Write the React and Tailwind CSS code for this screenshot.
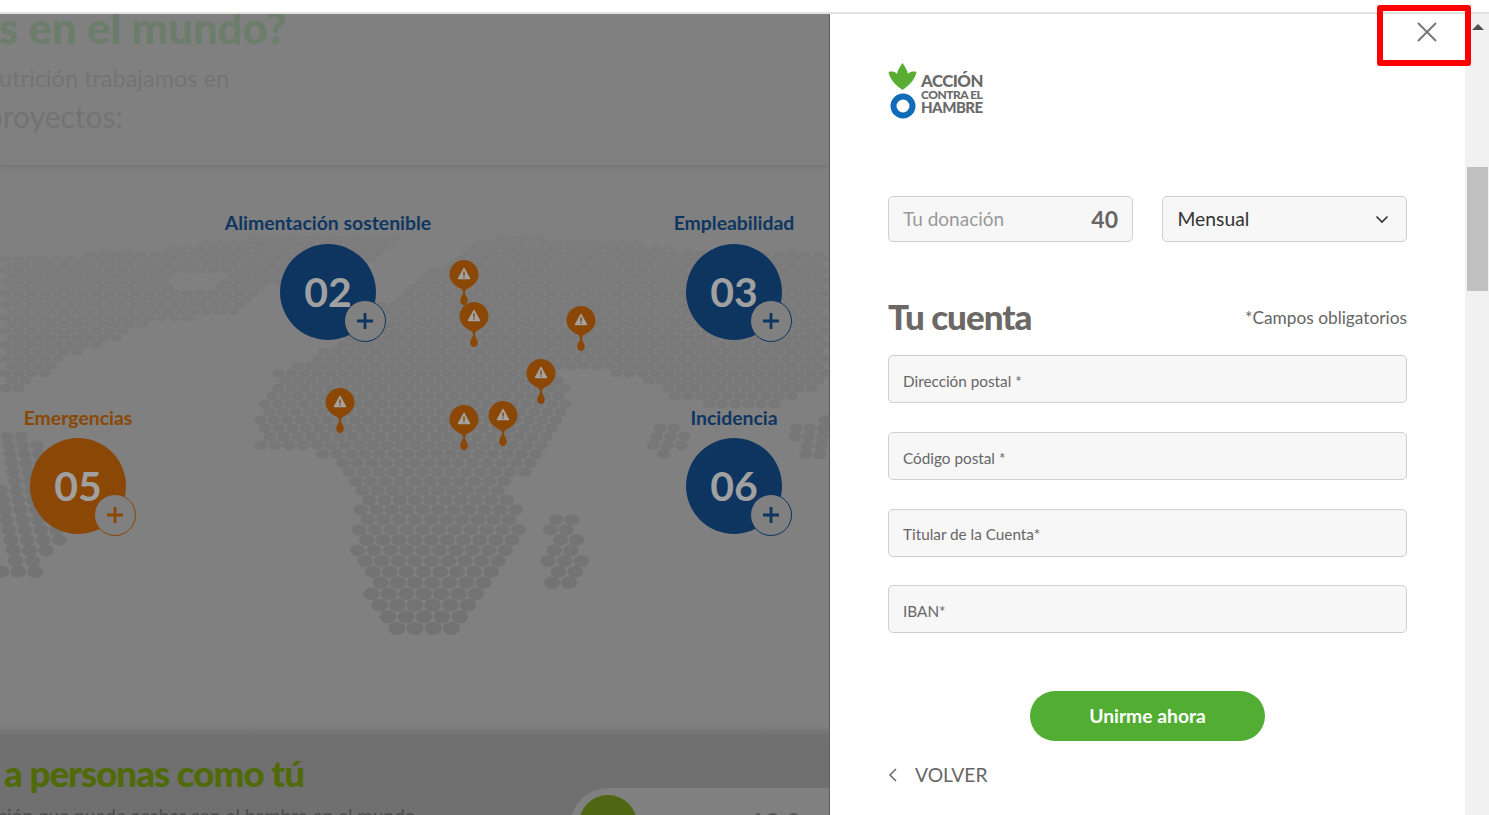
import React from "react";

const scale = (pts) => pts.map(([x, y]) => [x / 1.889, 215 + y / 3]);
const LAND = [
  [[530,460],[620,400],[800,390],[1060,450],[1075,540],[1060,640],[1040,700],[990,770],[960,820],[1000,880],[960,1000],[930,1080],[910,1150],[860,1245],[730,1245],[690,1100],[660,1030],[670,920],[680,830],[640,770],[600,700],[490,695],[480,620],[500,540]],
  [[620,400],[700,290],[800,180],[880,100],[950,50],[1050,70],[1150,70],[1300,100],[1568,110],[1568,480],[1500,560],[1400,575],[1300,560],[1200,490],[1090,450],[1060,450],[800,390]],
  [[0,125],[300,100],[440,70],[530,60],[760,60],[700,130],[640,190],[560,180],[480,230],[440,300],[300,310],[250,350],[120,430],[60,500],[0,560]],
  [[0,640],[60,650],[110,800],[130,960],[60,1080],[10,1095],[0,1090]],
  [[1030,905],[1095,905],[1105,1000],[1095,1120],[1025,1110],[1040,1000]],
  [[1225,620],[1310,640],[1310,670],[1260,735],[1225,690]],
  [[1480,620],[1568,610],[1568,725],[1520,720]],
].map(scale);
const HOLE = scale([[325,175],[430,165],[410,225],[320,230]]);

const inside = (x, y, p) => {
  let c = false;
  for (let i = 0, j = p.length - 1; i < p.length; j = i++) {
    const [xi, yi] = p[i];
    const [xj, yj] = p[j];
    if (yi > y !== yj > y && x < ((xj - xi) * (y - yi)) / (yj - yi) + xi) c = !c;
  }
  return c;
};

const dots = [];
{
  let y = 232;
  let row = 0;
  while (y < 630) {
    const t = (y - 232) / 398;
    const dy = 5 + t * 7;
    const sx = y < 400 ? 13 : 13 + ((y - 400) / 220) * 5;
    const v = Math.round(124 - t * 10);
    const start = 415 + (row % 2 ? sx / 2 : 0);
    const n = Math.ceil(430 / sx);
    for (let k = -n; k <= n; k++) {
      const x = start + k * sx;
      if (LAND.some((p) => inside(x, y, p)) && !inside(x, y, HOLE)) {
        dots.push([x, y, sx * 0.47, dy * 0.55, `rgb(${v},${v},${v})`]);
      }
    }
    y += dy;
    row++;
  }
}

function WorldMap() {
  return (
    <svg className="absolute left-0 top-[-165px] pointer-events-none" width="830" height="815" viewBox="0 0 830 815">
      {dots.map(([x, y, rx, ry, f], i) => (
        <ellipse key={i} cx={x} cy={y} rx={rx} ry={ry} fill={f} />
      ))}
    </svg>
  );
}

function Pin({ className }) {
  return (
    <svg className={`absolute ${className}`} width="30" height="46" viewBox="0 0 30 46">
      <path
        fill="#8a4705"
        d="M15 0C23 0 29.5 6.5 29.5 14.5C29.5 22 23 26.5 18.5 28.5C16.5 29.5 16 31 16 33C16 35 18.8 37.5 18.8 40.5C18.8 43 17.2 45 15 45C12.8 45 11.2 43 11.2 40.5C11.2 37.5 14 35 14 33C14 31 13.5 29.5 11.5 28.5C7 26.5 .5 22 .5 14.5C.5 6.5 7 0 15 0Z"
      />
      <path fill="#a3a3a3" stroke="#a3a3a3" strokeWidth="1.5" strokeLinejoin="round" d="M15 8.5L20.5 18.5H9.5Z" />
      <path stroke="#8a4705" strokeWidth="1.5" d="M15 11.5V15.5M15 16.5V17.8" />
    </svg>
  );
}

function Plus({ stroke }) {
  return (
    <svg width="18" height="18" viewBox="0 0 18 18">
      <path d="M9 1V17M1 9H17" stroke={stroke} strokeWidth="2.8" />
    </svg>
  );
}

function MapNode({ className, label, num, orange, circleGap = "mt-[9px]" }) {
  const text = orange ? "text-[#8a4705]" : "text-[#0f3660]";
  const bg = orange ? "bg-[#8a4705]" : "bg-[#0d3560]";
  const border = orange ? "border-[#8a4705]" : "border-[#0d3560]";
  return (
    <div className={`absolute w-[240px] flex flex-col items-center ${className}`}>
      <div className={`text-[19.4px] leading-[24px] font-bold whitespace-nowrap ${text}`}>{label}</div>
      <div className={`relative w-[96px] h-[96px] rounded-full flex items-center justify-center ${circleGap} ${bg}`}>
        <span className="-mt-[2px] text-[41px] font-bold text-[#a0a0a0] leading-none">{num}</span>
        <div className={`absolute left-[64px] top-[56px] w-[42px] h-[42px] rounded-full border bg-[#808080] flex items-center justify-center ${border}`}>
          <Plus stroke={orange ? "#8a4705" : "#0d3560"} />
        </div>
      </div>
    </div>
  );
}

function Logo() {
  return (
    <div className="flex items-start gap-[4px] h-[56px]">
      <div className="flex flex-col items-center w-[29px]">
        <svg width="29" height="27" viewBox="0 0 28 27">
          <path
            fill="#58ad32"
            d="M14 0C16 3 19 7 19.5 11C21 9 23 8 28 9C27 16 20 23 14 27C8 23 1 16 0 9C5 8 7 9 8.5 11C9 7 12 3 14 0Z"
          />
        </svg>
        <svg width="26" height="26" viewBox="0 0 26 26" className="mt-[3px]">
          <circle cx="13" cy="13" r="9.5" fill="none" stroke="#0f6cb8" strokeWidth="6" />
        </svg>
      </div>
      <div className="flex flex-col text-[#6a6a6a] font-black leading-none tracking-[-0.5px] mt-[9px]">
        <span className="text-[16.8px] leading-[17px]">ACCIÓN</span>
        <span className="text-[12px] leading-[11px]">CONTRA EL</span>
        <span className="text-[15px] leading-[14px]">HAMBRE</span>
      </div>
    </div>
  );
}

function Field({ label, className = "pb-0" }) {
  return (
    <div className={`h-[48px] w-full rounded-[5px] border border-[#cfcfcf] bg-[#f7f7f7] pl-[14px] pt-[4px] flex items-center text-[15.3px] text-[#666666] ${className}`}>
      {label}
    </div>
  );
}

export default function App() {
  return (
    <div className="relative h-[815px] w-full overflow-hidden bg-white flex flex-col font-['Lato',sans-serif]">
      <div className="h-[12px] shrink-0 bg-white" />
      <div className="h-[2px] shrink-0 bg-[#e2e2e2]" />
      <div className="flex flex-1 min-h-0">
        {/* background page under the dimmed overlay */}
        <div className="w-[830px] shrink-0 flex flex-col overflow-hidden bg-[#808080] border-r border-[#5c5c5c]">
          <div className="h-[152px] shrink-0 border-b border-[#767676] shadow-[0_1px_3px_rgba(0,0,0,0.08)] overflow-hidden">
            <div className="-mt-[12px] -ml-[1px] text-[43.5px] leading-[50px] font-black text-[#6d7d6c] whitespace-nowrap">s en el mundo?</div>
            <div className="mt-[11px] -ml-[1px] text-[23.5px] leading-[30px] text-[#737373] whitespace-nowrap">utrición trabajamos en</div>
            <div className="mt-[6px] -ml-[14px] text-[30px] leading-[34px] text-[#737373] whitespace-nowrap">proyectos:</div>
          </div>
          <div className="relative h-[559px] shrink-0">
            <WorldMap />
            <MapNode className="left-[208px] top-[45px]" label="Alimentación sostenible" num="02" />
            <MapNode className="left-[614px] top-[45px]" label="Empleabilidad" num="03" />
            <MapNode className="-left-[42px] top-[240px]" label="Emergencias" num="05" orange circleGap="mt-[8px]" />
            <MapNode className="left-[614px] top-[240px]" label="Incidencia" num="06" circleGap="mt-[8px]" />
            <Pin className="left-[449px] top-[94px]" />
            <Pin className="left-[459px] top-[136px]" />
            <Pin className="left-[566px] top-[140px]" />
            <Pin className="left-[526px] top-[193px]" />
            <Pin className="left-[325px] top-[222px]" />
            <Pin className="left-[449px] top-[239px]" />
            <Pin className="left-[488px] top-[235px]" />
          </div>
          <div className="flex-1 bg-gradient-to-b from-[#808080] via-[#707070] via-[8%] to-[#6f6f6f] flex">
            <div className="w-[570px] shrink-0 overflow-hidden pt-[26px]">
              <div className="pl-[4px] text-[36.7px] leading-[44px] font-black text-[#4f6a06] tracking-[-1px] whitespace-nowrap">a personas como tú</div>
              <div className="mt-[9px] -ml-[2px] text-[19px] leading-[24px] text-[#4e4e4e] whitespace-nowrap">ción que puede acabar con el hambre en el mundo</div>
            </div>
            <div className="flex-1 mt-[63px] rounded-tl-[38px] bg-[#808080] pl-[9px] pt-[7px] flex overflow-hidden">
              <div className="w-[58px] h-[58px] rounded-full bg-[#4f6712] shrink-0" />
              <div className="ml-[113px] pt-[12px] text-[26px] leading-[30px] font-bold text-[#5a5a5a] whitespace-nowrap">10.0</div>
            </div>
          </div>
        </div>

        {/* form panel */}
        <div className="relative flex-1 min-w-0 bg-white pl-[58px] pr-[58px] flex flex-col overflow-hidden">
          <div className="mt-[49px]">
            <Logo />
          </div>
          <div className="mt-[77px] flex justify-between">
            <div className="w-[245px] h-[46px] rounded-[5px] border border-[#cfcfcf] bg-[#f7f7f7] pl-[14px] pr-[14px] flex items-center justify-between">
              <span className="text-[19px] text-[#999999]">Tu donación</span>
              <span className="text-[23px] font-bold text-[#666666]">40</span>
            </div>
            <div className="w-[245px] h-[46px] rounded-[5px] border border-[#cfcfcf] bg-[#f7f7f7] pl-[14.5px] pr-[17px] flex items-center justify-between">
              <span className="text-[19.3px] text-[#333333]">Mensual</span>
              <svg width="14" height="9" viewBox="0 0 14 9">
                <path d="M1.5 1.5L7 7L12.5 1.5" fill="none" stroke="#333333" strokeWidth="1.6" />
              </svg>
            </div>
          </div>
          <div className="mt-[51px] flex items-center justify-between h-[48px]">
            <h2 className="-mt-[2px] text-[35px] font-black text-[#6b6866] tracking-[-1px] leading-none">Tu cuenta</h2>
            <span className="mt-[2px] text-[17.3px] text-[#666666]">*Campos obligatorios</span>
          </div>
          <div className="mt-[14px] flex flex-col gap-[29px]">
            <Field label="Dirección postal *" />
            <Field label="Código postal *" />
            <Field label="Titular de la Cuenta*" className="pb-[2px]" />
            <Field label="IBAN*" className="-mt-[1px]" />
          </div>
          <div className="mt-[58px] flex justify-center">
            <button className="w-[235px] h-[50px] rounded-full bg-[#52ad33] text-white text-[19.3px] font-bold">Unirme ahora</button>
          </div>
          <div className="mt-[21px] flex items-center gap-[18px] h-[26px]">
            <svg width="9" height="14" viewBox="0 0 9 14">
              <path d="M8 1L2 7L8 13" fill="none" stroke="#666666" strokeWidth="1.5" />
            </svg>
            <span className="text-[19.3px] text-[#666666]">VOLVER</span>
          </div>
        </div>

        {/* scrollbar */}
        <div className="w-[24px] shrink-0 bg-[#f1f1f1] pl-[2px] pr-[1px] flex flex-col">
          <div className="h-[153px] shrink-0 pt-[10px] flex justify-center items-start">
            <svg width="12" height="6" viewBox="0 0 12 6">
              <path d="M6 0L12 6H0Z" fill="#505050" />
            </svg>
          </div>
          <div className="h-[124px] bg-[#c1c1c1]" />
        </div>
      </div>

      {/* close button with highlight */}
      <div className="absolute left-[1377px] top-[5px] w-[94px] h-[61px] border-[6px] border-[#ff0000] rounded-[3px] flex items-center justify-center">
        <svg width="20" height="20" viewBox="0 0 20 20" className="-mt-[7px] ml-[6px]">
          <path d="M1 1L19 19M19 1L1 19" stroke="#777777" strokeWidth="2" />
        </svg>
      </div>
    </div>
  );
}
